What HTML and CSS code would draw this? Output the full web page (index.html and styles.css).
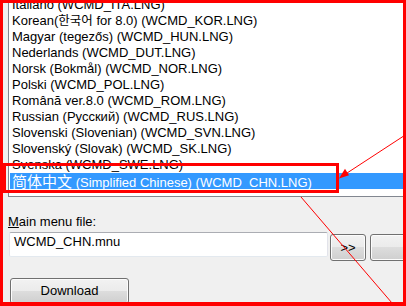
FILE: index.html
```html
<!DOCTYPE html>
<html>
<head>
<meta charset="utf-8">
<link rel="stylesheet" href="styles.css">
</head>
<body>
<div class="dialog">
  <div class="listbox">
    <ul class="items">
      <li>Italiano (WCMD_ITA.LNG)</li>
      <li>Korean(<span class="ko">한국어</span> for 8.0) (WCMD_KOR.LNG)</li>
      <li>Magyar (tegezős) (WCMD_HUN.LNG)</li>
      <li>Nederlands (WCMD_DUT.LNG)</li>
      <li>Norsk (Bokmål) (WCMD_NOR.LNG)</li>
      <li>Polski (WCMD_POL.LNG)</li>
      <li>Română ver.8.0 (WCMD_ROM.LNG)</li>
      <li>Russian (Русский) (WCMD_RUS.LNG)</li>
      <li>Slovenski (Slovenian) (WCMD_SVN.LNG)</li>
      <li>Slovenský (Slovak) (WCMD_SK.LNG)</li>
      <li>Svenska (WCMD_SWE.LNG)</li>
      <li class="selected"><span class="zh">简体中文</span> (Simplified Chinese) (WCMD_CHN.LNG)</li>
    </ul>
  </div>
  <div class="label"><u>M</u>ain menu file:</div>
  <div class="file-row">
    <div class="textbox">WCMD_CHN.mnu</div>
    <button class="btn btn-browse">&gt;&gt;</button>
    <button class="btn btn-next"></button>
  </div>
  <button class="btn btn-download">Download</button>
</div>
<div class="frame"></div>
<div class="mark"></div>
<svg class="arrows" width="406" height="306" viewBox="0 0 406 306">
  <line x1="406" y1="134.5" x2="344" y2="175" stroke="#ff0000" stroke-width="1"/>
  <polygon points="339,178.5 349,175.2 345,168.8" fill="#ff0000"/>
  <line x1="301" y1="197" x2="392" y2="303" stroke="#ff0000" stroke-width="1"/>
</svg>
</body>
</html>
```
FILE: styles.css
```css
* { box-sizing: border-box; }
html, body {
  margin: 0;
  padding: 0;
  width: 406px;
  height: 306px;
  overflow: hidden;
}
body {
  position: relative;
  font-family: "Liberation Sans", Arial, sans-serif;
  font-size: 13px;
  color: #000;
}
.dialog {
  width: 406px;
  height: 306px;
  background: #f0f0f0;
  padding-left: 8px;
  overflow: hidden;
}
.listbox {
  width: 420px;
  height: 197px;
  background: #fff;
  border-left: 1px solid #828790;
  border-bottom: 1px solid #828790;
  overflow: hidden;
}
.items {
  list-style: none;
  margin: -3px 0 0 1px;
  padding: 0;
}
.items li {
  height: 16px;
  line-height: 16px;
  padding-left: 2px;
  white-space: nowrap;
}
.items li.selected {
  background: #3399ff;
  color: #fff;
}
.ko {
  font-family: "Noto Sans CJK KR", sans-serif;
  font-size: 12.5px;
  line-height: 1;
}
.zh {
  font-family: "Noto Sans CJK SC", sans-serif;
  font-size: 15px;
  line-height: 1;
}
.label {
  margin-top: 17px;
  line-height: 16px;
  height: 16px;
}
.file-row {
  display: flex;
  align-items: flex-start;
  margin-top: 2px;
  margin-left: 1px;
  width: 480px;
}
.textbox {
  flex: 0 0 319px;
  width: 319px;
  height: 25px;
  background: #fff;
  border: 1px solid #e2e3ea;
  border-top-color: #abadb3;
  border-bottom-color: #e3e9ef;
  border-radius: 2px;
  padding: 1px 4px;
  line-height: 16px;
}
.btn {
  font-family: "Liberation Sans", Arial, sans-serif;
  font-size: 13px;
  color: #000;
  border: 1px solid #707070;
  border-radius: 3px;
  background: linear-gradient(#f2f2f2 0%, #ebebeb 50%, #dddddd 50%, #cfcfcf 100%);
  box-shadow: inset 0 0 0 1px #fcfcfc;
  padding: 0;
  line-height: 24px;
  flex-shrink: 0;
}
.btn-browse {
  width: 36px;
  height: 27px;
  margin-top: 2px;
  margin-left: 2px;
}
.btn-next {
  width: 60px;
  height: 27px;
  margin-top: 2px;
  margin-left: 4px;
}
.btn-download {
  display: block;
  width: 119px;
  height: 26px;
  margin-top: 17px;
  margin-left: 2px;
}
.frame {
  position: absolute;
  left: 0;
  top: 0;
  width: 406px;
  height: 306px;
  border-style: solid;
  border-color: #ff0000;
  border-width: 3px 3px 4px 3px;
}
.mark {
  position: absolute;
  left: 3px;
  top: 163px;
  width: 336px;
  height: 30px;
  border: 3px solid #ff0000;
}
.arrows {
  position: absolute;
  left: 0;
  top: 0;
}
```
